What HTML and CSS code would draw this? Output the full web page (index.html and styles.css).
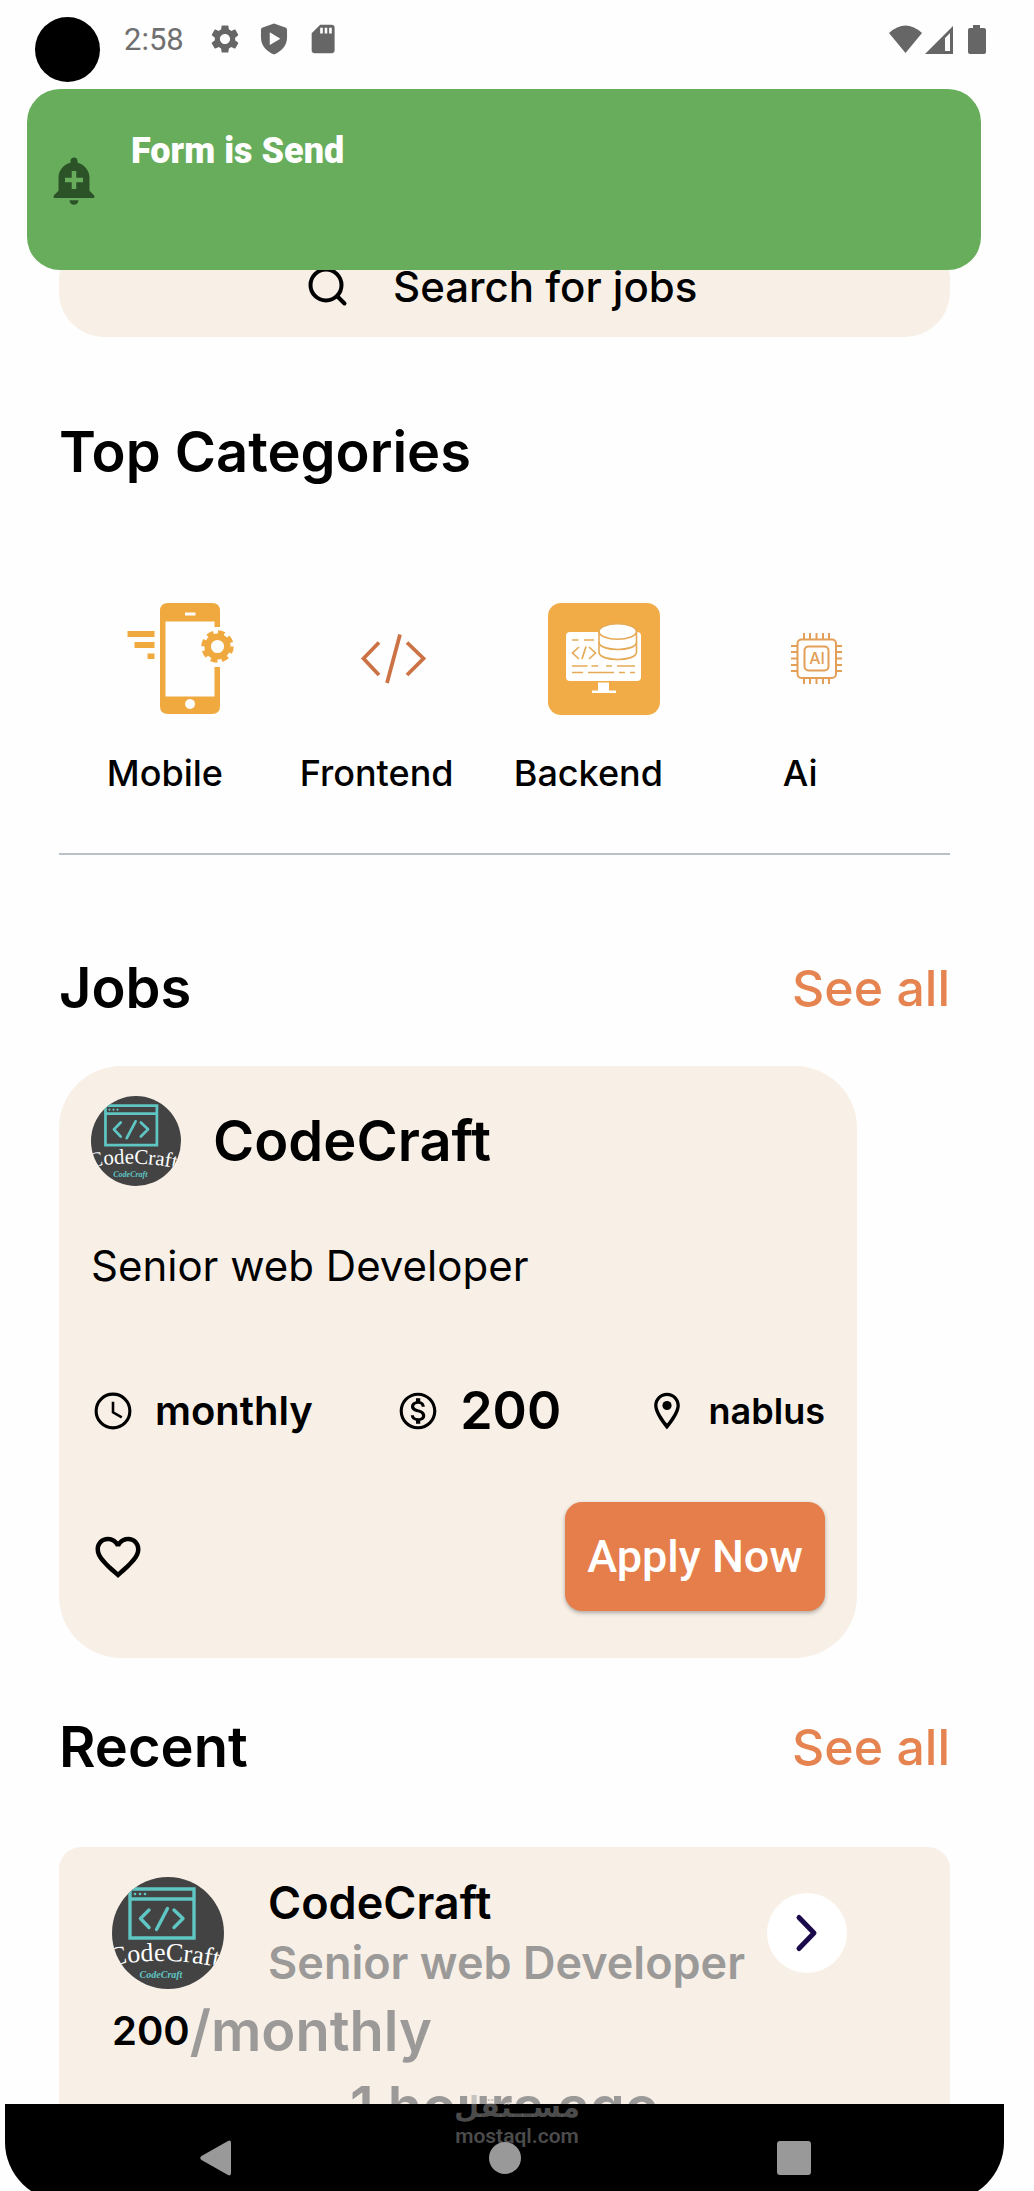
FILE: index.html
```html
<!DOCTYPE html>
<html lang="en">
  <head>
    <meta charset="UTF-8">
    <meta name="viewport" content="width=device-width, initial-scale=1">
    <title>Jobs</title>
    <link rel="stylesheet" href="styles.css">
  </head>
  <body>
    <!-- company logo, used by both cards -->
    <svg class="defs" width="0" height="0" aria-hidden="true">
      <symbol id="logo" viewBox="0 0 112 112">
        <rect width="112" height="112" fill="#434343"/>
        <g fill="none" stroke="#5fc6c4" stroke-width="3.4">
          <path d="M18 12h64v49H18zM18 22h64"/>
          <path d="M37 33l-8.500 8.500 8.500 9M62 33l9 8.500-9 9M55.500 31.500l-11 21" stroke-linecap="round" stroke-linejoin="round"/>
        </g>
        <g fill="#5fc6c4"><circle cx="23" cy="17" r="1.300"/><circle cx="28" cy="17" r="1.300"/><circle cx="33" cy="17" r="1.300"/></g>
        <path id="arc" d="M-1 89Q50 78 112 91" fill="none"/>
        <text class="logo-name"><textPath href="#arc">CodeCraft</textPath></text>
        <text class="logo-sub" x="49" y="101" text-anchor="middle">CodeCraft</text>
      </symbol>
    </svg>

    <div class="screen">
      <div class="status">
        <div class="camera"></div>
        <div class="status-left">
          <span class="time">2:58</span>
          <svg width="34" height="34" viewBox="0 0 24 24"><path d="M19.140 12.940c.040-.3.060-.610.060-.940 0-.320-.020-.640-.070-.940l2.030-1.580c.180-.140.230-.410.120-.610l-1.920-3.320c-.120-.220-.370-.290-.590-.220l-2.390.960c-.5-.380-1.030-.7-1.620-.940L14.400 2.810c-.040-.240-.240-.410-.480-.410h-3.840c-.240 0-.430.170-.470.410L9.250 5.350C8.660 5.590 8.120 5.920 7.630 6.290L5.240 5.330c-.220-.080-.470 0-.590.220L2.740 8.870c-.120.210-.080.470.120.610l2.030 1.580C4.840 11.360 4.800 11.690 4.800 12s.020.640.070.940l-2.030 1.580c-.180.140-.230.410-.120.610l1.920 3.320c.120.220.370.290.590.220l2.390-.960c.5.380 1.030.7 1.620.940l.360 2.540c.050.240.240.410.480.410h3.840c.240 0 .440-.170.470-.410l.360-2.540c.590-.240 1.130-.560 1.620-.940l2.390.960c.220.080.470 0 .590-.220l1.920-3.320c.120-.220.070-.470-.120-.610L19.140 12.940zM12 15.600c-1.980 0-3.600-1.620-3.600-3.600s1.620-3.600 3.600-3.600 3.600 1.620 3.600 3.600S13.980 15.600 12 15.600z"/></svg>
          <svg width="34" height="34" viewBox="0 0 24 24"><path fill-rule="evenodd" d="M12 1l8 2.800q1.200.4 1.200 1.600v5.600c0 5.500-3.700 9.800-9.200 12-5.500-2.200-9.200-6.500-9.200-12V5.400q0-1.200 1.200-1.600zM9 7.300v9l7.500-4.500z"/></svg>
          <svg width="34" height="34" viewBox="0 0 24 24"><path fill-rule="evenodd" d="M18 2h-8L4 8v12q0 2 2 2h12.200q2 0 2-2V4q0-2-2.200-2zM10 4h1.900v4.200H10zm3.200 0H15v4.200h-1.800zm3.100 0h1.900v4.200h-1.900z"/></svg>
        </div>
        <div class="status-right">
          <svg width="33" height="29" viewBox="0 0 33 29"><path d="M0 8Q16.500-7 33 8L16.500 28z"/></svg>
          <svg width="28" height="29" viewBox="0 0 28 29"><path fill-rule="evenodd" d="M0 29L28 1v28zM20 13v13h5V8z"/></svg>
          <svg class="battery" width="18" height="29" viewBox="0 0 18 29"><path d="M5 0h7v3h4q2 0 2 2v22q0 2-2 2H2q-2 0-2-2V5q0-2 2-2h3z"/></svg>
        </div>
      </div>

      <div class="toast" role="status">
        <svg width="54" height="54" viewBox="0 0 24 24"><path d="M10.010 21.010c0 1.100.890 1.990 1.990 1.990s1.990-.890 1.990-1.990h-3.980zm8.870-4.190V11c0-3.250-2.250-5.970-5.290-6.690v-.720C13.590 2.710 12.880 2 12 2s-1.590.710-1.590 1.590v.720C7.370 5.030 5.120 7.750 5.120 11v5.820L3 18.940V20h18v-1.060l-2.120-2.120zM16 13.010h-3v3h-2v-3H8V11h3V8h2v3h3v2.010z"/></svg>
        <p>Form is Send</p>
      </div>

      <main>
        <label class="search">
          <svg width="44" height="44" viewBox="0 0 44 44"><circle cx="22" cy="21" r="15.500"/><path d="M33.500 32.500l7 7"/></svg>
          <input type="text" placeholder="Search for jobs" aria-label="Search for jobs">
        </label>

        <h2 class="categories-title">Top Categories</h2>
        <div class="categories">
          <div class="category">
            <svg width="112" height="112" viewBox="0 0 112 112">
              <g fill="#efa93f">
                <path fill-rule="evenodd" d="M43 0h44q8 0 8 8v16h-5.500v-5.500h-49v75h49V64H95v39q0 8-8 8H43q-8 0-8-8V8q0-8 8-8zM60 9.500v3h10.500v-3zM65 96a5 5 0 1 0 .1 0z"/>
                <path d="M2.500 28h27v6h-27zM9.500 39h20v6h-20zM22.500 50.500h7V56h-7z"/>
              </g>
              <g fill="none" stroke="#efa93f"><circle cx="92.500" cy="43.500" r="9.800" stroke-width="6.500"/><circle cx="92.500" cy="43.500" r="14.200" stroke-width="4" stroke-dasharray="6.650 4.500"/></g>
            </svg>
            <span>Mobile</span>
          </div>
          <div class="category">
            <svg width="112" height="112" viewBox="0 0 112 112" fill="none" stroke="#cc7346" stroke-width="3.800"><path d="M42 39.500L26.500 55.500 42 72M70 39.500l16.500 16L70 72M63 31.500L50 80"/></svg>
            <span>Frontend</span>
          </div>
          <div class="category">
            <svg width="112" height="112" viewBox="0 0 112 112">
              <rect width="112" height="112" rx="13" fill="#f1ac47"/>
              <rect x="18" y="29" width="75" height="49" rx="4" fill="#fff"/>
              <path d="M50 79.500h11v8h7v2.500H44v-2.500h6z" fill="#fff"/>
              <g fill="#fff" stroke="#e5aa55" stroke-width="1.600">
                <path d="M51 28v21c0 10 37.500 10 37.500 0V28"/>
                <ellipse cx="69.700" cy="28.500" rx="18.700" ry="7.800"/>
                <path d="M51 39c0 10 37.500 10 37.500 0" fill="none"/>
              </g>
              <g fill="none" stroke="#e5aa55" stroke-width="1.700">
                <path d="M31 44l-6.500 6 6.500 6M41 44l6.500 6-6.500 6M38 43.500L34 56"/>
                <path d="M24 37h6.500M36 37h10M24 63h15.500M43.500 63H50M58 63h6M69 63h18M24 69.500h11M40 69.500h26M71 69.500h6M82 69.500h5"/>
              </g>
            </svg>
            <span>Backend</span>
          </div>
          <div class="category">
            <svg width="112" height="112" viewBox="0 0 112 112">
              <g fill="none" stroke="#e39f57" stroke-width="2">
                <rect x="37.500" y="36.500" width="38.500" height="38.500" rx="4"/>
                <rect x="44.500" y="43.500" width="24" height="24" rx="4"/>
                <path d="M44 30v6M50 30v6M56.500 30v6M63 30v6M69 30v6M44 75v6M50 75v6M56.500 75v6M63 75v6M69 75v6M31 43h6M31 49h6M31 55.500h6M31 62h6M31 68h6M76 43h6M76 49h6M76 55.500h6M76 62h6M76 68h6"/>
              </g>
              <text class="chip" x="57" y="61" text-anchor="middle">AI</text>
            </svg>
            <span>Ai</span>
          </div>
        </div>
        <hr>

        <div class="section-head jobs-head">
          <h2>Jobs</h2>
          <a href="#jobs">See all</a>
        </div>
        <div class="job" id="jobs">
          <div class="job-head">
            <svg class="avatar" width="90" height="90"><use href="#logo"/></svg>
            <h3>CodeCraft</h3>
          </div>
          <p class="job-title">Senior web Developer</p>
          <div class="job-info">
            <div class="info">
              <svg width="44" height="44" viewBox="0 0 24 24" fill="none" stroke="#000"><circle cx="12" cy="12" r="9.200" stroke-width="1.700"/><path d="M12 7v5.700l4.800 2.800" stroke-width="1.400"/></svg>
              <span>monthly</span>
            </div>
            <div class="info salary">
              <svg width="44" height="44" viewBox="0 0 24 24"><path d="M12 2C6.480 2 2 6.480 2 12s4.480 10 10 10 10-4.480 10-10S17.520 2 12 2zm0 18.300c-4.600 0-8.300-3.700-8.300-8.300s3.700-8.300 8.300-8.300 8.300 3.700 8.300 8.300-3.700 8.300-8.300 8.300zm.310-9.160c-1.770-.450-2.340-.940-2.340-1.670 0-.840.790-1.430 2.100-1.430 1.380 0 1.900.660 1.940 1.640h1.710c-.050-1.340-.870-2.570-2.490-2.970V5H10.900v1.690c-1.510.320-2.720 1.300-2.720 2.810 0 1.790 1.490 2.690 3.660 3.210 1.950.460 2.340 1.150 2.340 1.870 0 .530-.390 1.390-2.100 1.390-1.600 0-2.230-.720-2.320-1.640H8.040c.1 1.700 1.360 2.660 2.860 2.970V19h2.340v-1.670c1.520-.290 2.720-1.160 2.730-2.770-.010-2.200-1.900-2.960-3.660-3.420z"/></svg>
              <span>200</span>
            </div>
            <div class="info place">
              <svg width="44" height="44" viewBox="0 0 24 24"><path d="M12 2C8.130 2 5 5.130 5 9c0 5.250 7 13 7 13s7-7.750 7-13c0-3.870-3.130-7-7-7zM6.800 9c0-2.900 2.300-5.200 5.200-5.200s5.200 2.300 5.200 5.200c0 2.880-3.080 7.190-5.200 9.880C9.920 16.210 6.800 11.850 6.800 9z"/><circle cx="12" cy="9" r="2.500"/></svg>
              <span>nablus</span>
            </div>
          </div>
          <div class="job-actions">
            <button class="like" aria-label="Save job">
              <svg width="54" height="54" viewBox="0 0 24 24"><path d="M16.500 3c-1.740 0-3.410.810-4.500 2.090C10.910 3.810 9.240 3 7.500 3 4.420 3 2 5.420 2 8.500c0 3.780 3.400 6.860 8.550 11.540L12 21.350l1.450-1.320C18.600 15.360 22 12.280 22 8.500 22 5.420 19.580 3 16.500 3zm-4.400 15.550l-.1.1-.1-.1C7.140 14.240 4 11.390 4 8.500 4 6.500 5.500 5 7.500 5c1.540 0 3.040.990 3.570 2.360h1.870C13.460 5.990 14.960 5 16.500 5c2 0 3.500 1.500 3.500 3.500 0 2.890-3.140 5.740-7.900 10.050z"/></svg>
            </button>
            <button class="apply">Apply Now</button>
          </div>
        </div>

        <div class="section-head recent-head">
          <h2>Recent</h2>
          <a href="#recent">See all</a>
        </div>
        <div class="recent" id="recent">
          <div class="recent-top">
            <svg class="avatar" width="112" height="112"><use href="#logo"/></svg>
            <div class="recent-text">
              <h3>CodeCraft</h3>
              <p>Senior web Developer</p>
            </div>
            <button class="go" aria-label="Open job">
              <svg width="24" height="40" viewBox="0 0 24 40"><path d="M4 4.500l15 15.500L4 35.500"/></svg>
            </button>
          </div>
          <div class="rate"><span>200</span>/monthly</div>
          <div class="ago">1 hours ago</div>
        </div>
      </main>

      <div class="nav">
        <button aria-label="Back"><svg width="32" height="36" viewBox="0 0 32 36"><path d="M28 1q3-1.500 3 2v30q0 3.500-3 2L1.500 20Q-1 18 1.500 16z"/></svg></button>
        <button aria-label="Home"><svg width="32" height="36" viewBox="0 0 32 36"><circle cx="16" cy="18" r="16"/></svg></button>
        <button aria-label="Overview"><svg width="34" height="36" viewBox="0 0 34 36"><rect y="1" width="34" height="34" rx="3"/></svg></button>
      </div>

      <div class="watermark">
        <span class="wm-ar" lang="ar" dir="rtl">مســتقل</span>
        <span class="wm-en">mostaql.com</span>
      </div>
    </div>
  </body>
</html>
```
FILE: styles.css
```css
* { box-sizing: border-box; }
body {
  margin: 0;
  background-color: #fefefe;
  color: #000;
  font-family: Inter, 'Open Sans', sans-serif;
}
h2, h3, p { margin: 0; }
h2, h3 {
  font-size: 56px;
  font-weight: 600;
  line-height: 64px;
}
svg {
  display: block;
  flex: none;
}
button {
  padding: 0;
  border: 0;
  background: none;
  cursor: pointer;
}
.defs { position: absolute; }

.screen {
  position: relative;
  display: flex;
  flex-direction: column;
  height: 100vh;
  margin: 0 30px 0 5px;
  overflow: hidden;
}

/* status bar */
.status {
  display: flex;
  flex: none;
  height: 99px;
  padding: 17px 18px 0 30px;
  fill: #666;
}
.camera {
  width: 65px;
  height: 65px;
  border-radius: 50%;
  background-color: #000;
}
.status-left, .status-right {
  display: flex;
  align-items: center;
  height: 44px;
}
.status-left {
  gap: 15px;
  margin-left: 24px;
}
.time {
  margin-right: 9px;
  color: #707070;
  font-family: Roboto, sans-serif;
  font-size: 31px;
}
.status-right {
  gap: 3px;
  margin-left: auto;
}
.battery { margin-left: 12px; }

.toast {
  position: absolute;
  top: 89px;
  left: 22px;
  right: 23px;
  z-index: 1;
  display: flex;
  align-items: center;
  gap: 30px;
  height: 181px;
  padding: 0 20px;
  border-radius: 33px;
  background-color: #68ad5c;
  fill: #2c5227;
}
.toast p {
  align-self: flex-start;
  padding-top: 41px;
  color: #fff;
  font-family: Roboto, sans-serif;
  font-size: 36px;
  font-weight: 900;
  line-height: 42px;
}

main {
  flex: 1;
  min-height: 0;
  padding: 136px 54px 0;
  overflow: hidden;
}
.search {
  display: flex;
  align-items: center;
  justify-content: center;
  gap: 45px;
  height: 102px;
  border-radius: 45px;
  background-color: #f8f0e7;
}
.search svg {
  fill: none;
  stroke: #000;
  stroke-width: 4;
  stroke-linecap: round;
}
.search input {
  width: 312px;
  height: 60px;
  padding: 0;
  border: 0;
  outline: 0;
  background: none;
  font-family: inherit;
  font-size: 42px;
  font-weight: 500;
}
.search input::placeholder {
  color: #000;
  opacity: 1;
}

/* categories */
.categories-title { margin-top: 83px; }
.categories {
  display: grid;
  grid-template-columns: repeat(4, 1fr);
  margin-top: 119px;
  padding-right: 44px;
}
.category {
  display: flex;
  flex-direction: column;
  align-items: center;
  gap: 34px;
  font-size: 36px;
  font-weight: 500;
  line-height: 48px;
}
.category svg { margin-left: 32px; }
.chip {
  fill: #e39f57;
  font-size: 16px;
  font-weight: 500;
}
hr {
  height: 2px;
  margin: 56px 0 0;
  border: 0;
  background-color: #b9c0c8;
}

.section-head {
  display: flex;
  align-items: center;
  justify-content: space-between;
}
.section-head a {
  color: #e58450;
  font-size: 50px;
  font-weight: 500;
  line-height: 64px;
  text-decoration: none;
}
.jobs-head { margin: 101px 0 46px; }
.recent-head { margin: 57px 0 68px; }

.avatar { border-radius: 50%; }
.logo-name {
  fill: #fff;
  font-family: 'Liberation Serif', serif;
  font-size: 26px;
  font-weight: normal;
}
.logo-sub {
  fill: #5fc6c4;
  font-family: 'Liberation Serif', serif;
  font-size: 10px;
  font-style: italic;
  font-weight: bold;
}

/* job card */
.job {
  margin-right: 93px;
  padding: 30px 32px 47px;
  border-radius: 62px;
  background-color: #f8f0e7;
}
.job-head {
  display: flex;
  align-items: center;
  gap: 32px;
}
.job-title {
  margin-top: 52px;
  font-size: 42px;
  line-height: 56px;
}
.job-info {
  display: flex;
  justify-content: space-between;
  margin-top: 85px;
}
.info {
  display: flex;
  align-items: center;
  gap: 20px;
  font-size: 40px;
  font-weight: 600;
  line-height: 64px;
}
.salary { font-size: 52px; }
.place { font-size: 36px; }
.job-actions {
  display: flex;
  align-items: center;
  justify-content: space-between;
  margin-top: 59px;
}
.apply {
  width: 260px;
  height: 109px;
  border-radius: 17px;
  background-color: #e57e4b;
  box-shadow: 0 2px 4px rgba(0, 0, 0, 0.3);
  color: #fff;
  font-family: Roboto, sans-serif;
  font-size: 45px;
  font-weight: 500;
}

/* recent card */
.recent {
  padding: 26px 103px 30px 53px;
  border-radius: 22px;
  background-color: #f8f0e7;
  color: #9b9a99;
  font-size: 56px;
  font-weight: 600;
  line-height: 76px;
}
.recent-top {
  display: flex;
  align-items: center;
}
.recent-text {
  margin-left: 44px;
  font-size: 45px;
  line-height: 60px;
  white-space: nowrap;
}
.recent-text h3 {
  color: #000;
  font-size: 45px;
  line-height: 60px;
}
.go {
  display: flex;
  align-items: center;
  justify-content: center;
  width: 80px;
  height: 80px;
  margin-left: auto;
  border-radius: 50%;
  background-color: #fff;
}
.go svg {
  fill: none;
  stroke: #1b0a4b;
  stroke-width: 5;
  stroke-linecap: round;
  stroke-linejoin: round;
}
.rate {
  display: flex;
  align-items: center;
}
.rate span {
  color: #000;
  font-size: 40px;
}
.ago {
  margin-right: -50px;
  text-align: center;
}

/* system navigation, runs a little past the bottom edge */
.nav {
  display: grid;
  grid-template-columns: repeat(3, 1fr);
  flex: none;
  height: 97px;
  margin-bottom: -10px;
  padding: 36px 66px 25px;
  border-radius: 0 0 59px 59px;
  background-color: #000;
  fill: #999;
}
.nav button {
  display: flex;
  align-items: center;
  justify-content: center;
}

.watermark {
  position: absolute;
  right: 0;
  bottom: 43px;
  left: 25px;
  z-index: 1;
  display: flex;
  flex-direction: column;
  align-items: center;
  color: rgba(150, 150, 150, 0.5);
  font-weight: 600;
  pointer-events: none;
}
.wm-ar {
  font-family: 'DejaVu Sans', sans-serif;
  font-size: 29px;
  font-weight: bold;
  line-height: 34px;
}
.wm-en {
  font-family: Roboto, sans-serif;
  font-size: 21px;
  line-height: 24px;
}
```
